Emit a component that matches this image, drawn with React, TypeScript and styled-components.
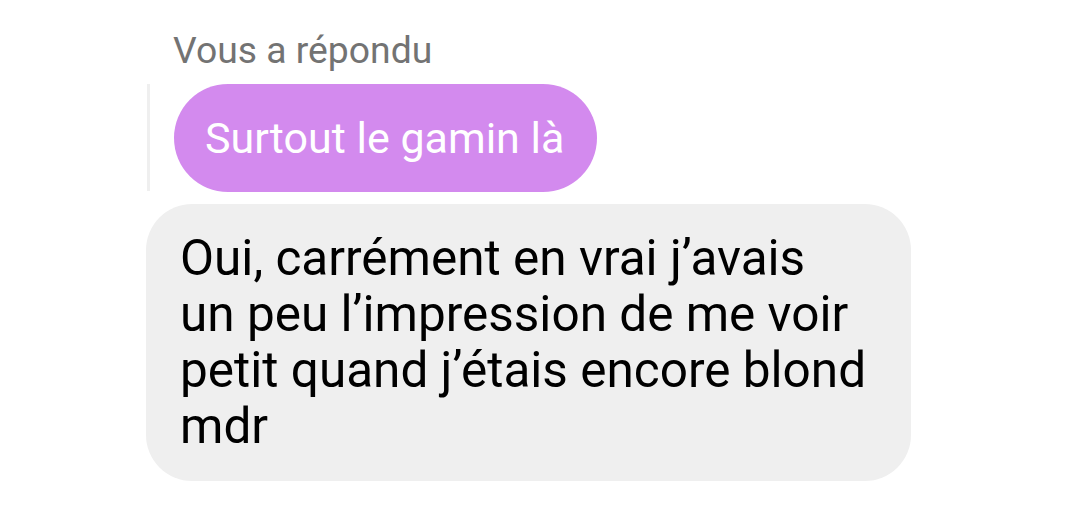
import React from 'react'
import styled, { createGlobalStyle } from 'styled-components'

const GlobalStyle = createGlobalStyle`
  html, body {
    margin: 0;
    padding: 0;
    background: #ffffff;
  }
  body {
    font-family: Roboto, "Liberation Sans", sans-serif;
  }
`

const Thread = styled.div`
  display: flex;
  flex-direction: column;
  align-items: flex-start;
  padding: 26px 0 0 146px;
  width: 1079px;
  height: 523px;
  box-sizing: border-box;
`

const ReplyLabel = styled.div`
  color: #737373;
  font-size: 37.3px;
  line-height: 48px;
  margin-left: 27px;
  margin-bottom: 10px;
`

const Quote = styled.div`
  display: flex;
  align-items: stretch;
  gap: 24px;
  margin-left: 1px;
`

const QuoteBar = styled.div`
  width: 3px;
  background: #efefef;
  margin: 0 0 1px;
`

const QuotedBubble = styled.div`
  background: #d38aee;
  color: #ffffff;
  font-size: 43px;
  height: 108px;
  line-height: 108px;
  padding: 0 33px 0 31px;
  border-radius: 54px;
`

const Bubble = styled.div`
  margin-top: 12px;
  width: 765px;
  box-sizing: border-box;
  background: #efefef;
  color: #000000;
  font-size: 49.5px;
  line-height: 56px;
  padding: 26px 20px 27px 34px;
  border-radius: 46px;
`

export default function App() {
  return (
    <>
      <GlobalStyle />
      <Thread>
        <ReplyLabel>Vous a répondu</ReplyLabel>
        <Quote>
          <QuoteBar />
          <QuotedBubble>Surtout le gamin là</QuotedBubble>
        </Quote>
        <Bubble>
          Oui, carrément en vrai j’avais
          <br />
          un peu l’impression de me voir
          <br />
          petit quand j’étais encore blond
          <br />
          mdr
        </Bubble>
      </Thread>
    </>
  )
}
